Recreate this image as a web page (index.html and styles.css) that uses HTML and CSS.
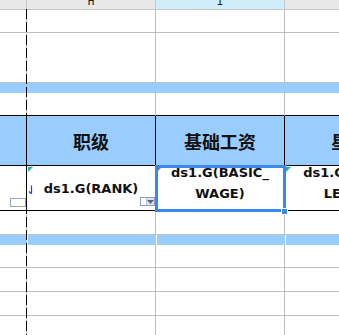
FILE: index.html
```html
<!DOCTYPE html>
<html>
<head>
<meta charset="utf-8">
<link rel="stylesheet" href="styles.css">
</head>
<body>
<div class="sheet">
  <div class="row hdr">
    <div class="cell g"></div>
    <div class="cell h"><span class="letter">H</span></div>
    <div class="cell i sel"><span class="letter">I</span></div>
    <div class="cell j"></div>
  </div>
  <div class="row r23"><div class="cell g"></div><div class="cell h"></div><div class="cell i"></div><div class="cell j"></div></div>
  <div class="row r50"><div class="cell g"></div><div class="cell h"></div><div class="cell i"></div><div class="cell j"></div></div>
  <div class="band"></div>
  <div class="row r23 above"><div class="cell g"></div><div class="cell h"></div><div class="cell i"></div><div class="cell j"></div></div>
  <div class="row hrow">
    <div class="cell g"></div>
    <div class="cell h">职级</div>
    <div class="cell i">基础工资</div>
    <div class="cell j">星级</div>
  </div>
  <div class="row drow">
    <div class="cell g"><span class="combo-left"></span></div>
    <div class="cell h">
      <span class="corner teal"></span>
      <svg class="expand" width="6" height="10" viewBox="0 0 6 10"><path d="M3.5 0.5 V8.5 M1 6.5 L3.5 8.8" fill="none" stroke="#1f3cf0" stroke-width="1.2"/></svg>
      <span class="txt">ds1.G(RANK)</span>
      <span class="combo"><span class="combo-field"></span><span class="combo-btn"><svg width="7" height="4" viewBox="0 0 7 4"><path d="M0 0 H7 L3.5 4 Z" fill="#5a6478"/></svg></span></span>
    </div>
    <div class="cell i">
      <span class="corner grey"></span>
      <span class="txt two">ds1.G(BASIC_<br>WAGE)</span>
    </div>
    <div class="cell j">
      <span class="corner teal"></span>
      <span class="txt two">ds1.G(STAR_<br>LEVEL)</span>
    </div>
  </div>
  <div class="row r24"><div class="cell g"></div><div class="cell h"></div><div class="cell i"></div><div class="cell j"></div></div>
  <div class="row band2"><div class="bcell g"></div><div class="bcell h"></div><div class="bcell i"></div><div class="bcell j"></div></div>
  <div class="row r23"><div class="cell g"></div><div class="cell h"></div><div class="cell i"></div><div class="cell j"></div></div>
  <div class="row r24"><div class="cell g"></div><div class="cell h"></div><div class="cell i"></div><div class="cell j"></div></div>
  <div class="row r24"><div class="cell g"></div><div class="cell h"></div><div class="cell i"></div><div class="cell j"></div></div>
  <div class="row r24"><div class="cell g"></div><div class="cell h"></div><div class="cell i"></div><div class="cell j"></div></div>

  <div class="pagebreak"></div>
  <div class="selection"></div>
  <div class="handle"></div>
</div>
</body>
</html>
```

FILE: styles.css
```css
html, body {
  margin: 0;
  padding: 0;
  background: #ffffff;
}
body {
  width: 339px;
  height: 335px;
  overflow: hidden;
  font-family: "DejaVu Sans", sans-serif;
  color: #111;
}
.sheet {
  position: relative;
  display: flex;
  flex-direction: column;
  width: 414px;
}
.row {
  display: flex;
  flex: none;
}
.cell, .bcell {
  position: relative;
  box-sizing: border-box;
  flex: none;
  height: 100%;
}
.cell {
  border-right: 1px solid #c0c0c0;
  border-bottom: 1px solid #c0c0c0;
}
.g { width: 27px; }
.h { width: 129px; }
.i { width: 129px; }
.j { width: 129px; }

.hdr { height: 10px; }
.r23 { height: 23px; }
.r24 { height: 24px; }
.r50 { height: 50px; }

.hdr .cell {
  background: #e8e8e8;
  border-color: #c8c8c8;
  display: flex;
  justify-content: center;
  align-items: flex-end;
  overflow: hidden;
}
.hdr .sel {
  background: #cdeefa;
}
.letter {
  font-family: "DejaVu Sans Mono", monospace;
  font-size: 11px;
  line-height: 11px;
  margin-bottom: 2px;
  color: #1a1a1a;
}

.band {
  height: 10px;
  flex: none;
  background: #99ccff;
}
.band2 {
  height: 10px;
  background: #99ccff;
}
.band2 .h, .band2 .i, .band2 .j {
  border-left: 1px solid #ffffff;
}

.above .cell {
  border-bottom-color: #000;
}

.hrow {
  height: 50px;
}
.hrow .cell {
  background: #99ccff;
  border-color: #000;
  display: flex;
  align-items: center;
  justify-content: center;
  font-family: "Noto Sans CJK SC", sans-serif;
  font-weight: 700;
  font-size: 18px;
  color: #111;
  white-space: nowrap;
}

.drow {
  height: 45px;
}
.drow .cell {
  border-color: #000;
  display: flex;
  align-items: center;
  justify-content: center;
  text-align: center;
  font-weight: 700;
  font-size: 13px;
  line-height: 21px;
  white-space: nowrap;
}
.txt.two {
  align-self: flex-start;
  margin-top: -4px;
}

.corner {
  position: absolute;
  left: 0;
  top: 0;
  width: 0;
  height: 0;
}
.corner.teal {
  left: 1px;
  top: 1px;
  border-top: 5px solid #22b3a3;
  border-right: 5px solid transparent;
}
.corner.grey {
  left: 2px;
  top: 2px;
  border-top: 3px solid #808080;
  border-right: 3px solid transparent;
}
.expand {
  position: absolute;
  left: 1px;
  top: 19px;
}

.combo {
  position: absolute;
  left: 113px;
  top: 31px;
  width: 15px;
  height: 9px;
  box-sizing: border-box;
  border: 1px solid #8e9cbf;
  display: flex;
  background: #fff;
}
.combo-field {
  flex: 1;
}
.combo-btn {
  width: 7px;
  background: #dde2ea;
  border-left: 1px solid #b8c2d6;
  display: flex;
  align-items: center;
  justify-content: center;
}
.combo-left {
  position: absolute;
  left: 10px;
  top: 32px;
  width: 16px;
  height: 9px;
  box-sizing: border-box;
  border: 1px solid #9aa5c0;
  background: #fff;
}

.pagebreak {
  position: absolute;
  left: 26px;
  top: 9px;
  bottom: 0;
  width: 1px;
  background: repeating-linear-gradient(to bottom, #000 0 10px, transparent 10px 13px);
}
.selection {
  position: absolute;
  left: 155px;
  top: 165px;
  width: 131px;
  height: 47px;
  box-sizing: border-box;
  border: 3px solid #3a88ec;
}
.handle {
  position: absolute;
  left: 282px;
  top: 209px;
  width: 5px;
  height: 5px;
  background: #3a88ec;
  box-shadow: 0 0 0 1px #ffffff;
}
```
